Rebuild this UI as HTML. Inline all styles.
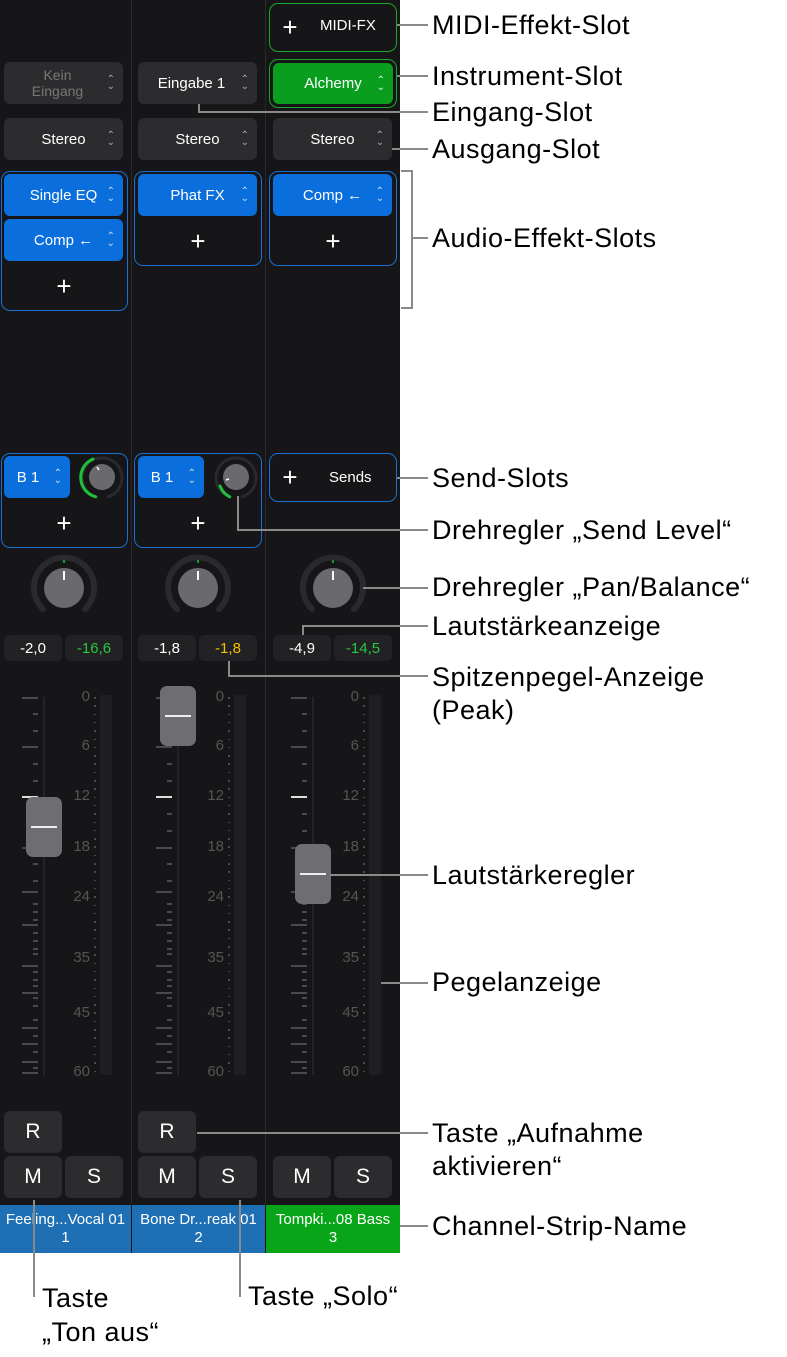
<!DOCTYPE html>
<html><head><meta charset="utf-8">
<style>
*{margin:0;padding:0;box-sizing:border-box}
body{width:787px;height:1357px;background:#fff;position:relative;overflow:hidden;font-family:"Liberation Sans",sans-serif}
#mix{position:absolute;left:0;top:0;width:400px;height:1253px;background:#161618}
.a{position:absolute}
.div{position:absolute;top:0;width:1px;height:1205px;background:#2a2a2d}
.btn{position:absolute;background:#2c2c2f;border-radius:6px;color:#fff;font-size:15px;display:flex;align-items:center;justify-content:center}
.blue{background:#0a6fdc}
.grn{background:#0a9e1e}
.box{position:absolute;border:1.5px solid #1a6fd0;border-radius:9px}
.chev{position:absolute;right:8px;top:50%;transform:translateY(-50%);font-size:10px;line-height:7px;color:#aaa;text-align:center}
.plus{position:absolute;color:#fff;font-size:26px;font-weight:300;width:30px;text-align:center;line-height:26px}
.val{position:absolute;background:#222224;border-radius:5px;font-size:15px;color:#fff;display:flex;align-items:center;justify-content:center;height:26px;width:58px}
.lbl{position:absolute;left:432px;font-size:27px;letter-spacing:0.5px;color:#000;line-height:30px;white-space:nowrap}
.ln{position:absolute;background:#8a8a8a}
.cap{position:absolute;width:36px;height:60px;background:#6e6e72;border-radius:7px}
.cap:after{content:"";position:absolute;left:5px;right:5px;top:29px;height:2px;background:#eee}
.name{position:absolute;top:1205px;height:48px;color:#fff;font-size:15px;text-align:center;line-height:18px;padding-top:6px;white-space:nowrap;overflow:hidden}
</style></head><body>
<div id="mix">
<div class="div" style="left:131px"></div><div class="div" style="left:265px"></div>

<div class="a" style="left:269px;top:3px;width:128px;height:49px;border:1.5px solid #18a82a;border-radius:9px"></div>
<div class="plus" style="left:275px;top:14px">+</div>
<div class="a" style="left:320px;top:17px;color:#fff;font-size:15px">MIDI-FX</div>
<div class="a" style="left:269px;top:59px;width:128px;height:49px;border:1.5px solid #18a82a;border-radius:9px"></div>
<div class="btn grn" style="left:273px;top:63px;width:120px;height:41px">Alchemy<span class="chev" style="color:#cfe">⌃<br>⌄</span></div>

<div class="btn" style="left:4px;top:62px;width:119px;height:42px;color:#777;font-size:14px;line-height:16px;text-align:center;padding-right:12px">Kein<br>Eingang<span class="chev">⌃<br>⌄</span></div>
<div class="btn" style="left:138px;top:62px;width:119px;height:42px;padding-right:12px">Eingabe 1<span class="chev">⌃<br>⌄</span></div>

<div class="btn" style="left:4px;top:118px;width:119px;height:42px">Stereo<span class="chev">⌃<br>⌄</span></div>
<div class="btn" style="left:138px;top:118px;width:119px;height:42px">Stereo<span class="chev">⌃<br>⌄</span></div>
<div class="btn" style="left:273px;top:118px;width:119px;height:42px">Stereo<span class="chev">⌃<br>⌄</span></div>

<div class="box" style="left:1px;top:171px;width:127px;height:140px"></div>
<div class="btn blue" style="left:4px;top:174px;width:119px;height:42px">Single EQ<span class="chev" style="color:#cde">⌃<br>⌄</span></div>
<div class="btn blue" style="left:4px;top:219px;width:119px;height:42px">Comp ←<span class="chev" style="color:#cde">⌃<br>⌄</span></div>
<div class="plus" style="left:49px;top:273px">+</div>
<div class="box" style="left:134px;top:171px;width:128px;height:95px"></div>
<div class="btn blue" style="left:138px;top:174px;width:119px;height:42px">Phat FX<span class="chev" style="color:#cde">⌃<br>⌄</span></div>
<div class="plus" style="left:183px;top:228px">+</div>
<div class="box" style="left:269px;top:171px;width:128px;height:95px"></div>
<div class="btn blue" style="left:273px;top:174px;width:119px;height:42px">Comp ←<span class="chev" style="color:#cde">⌃<br>⌄</span></div>
<div class="plus" style="left:318px;top:228px">+</div>

<div class="box" style="left:1px;top:453px;width:127px;height:95px"></div>
<div class="btn blue" style="left:4px;top:456px;width:66px;height:42px;padding-right:18px">B 1<span class="chev" style="color:#cde">⌃<br>⌄</span></div>
<div class="plus" style="left:49px;top:510px">+</div>
<div class="box" style="left:134px;top:453px;width:128px;height:95px"></div>
<div class="btn blue" style="left:138px;top:456px;width:66px;height:42px;padding-right:18px">B 1<span class="chev" style="color:#cde">⌃<br>⌄</span></div>
<div class="plus" style="left:183px;top:510px">+</div>
<div class="box" style="left:269px;top:453px;width:128px;height:49px"></div>
<div class="plus" style="left:275px;top:464px">+</div>
<div class="a" style="left:329px;top:469px;color:#fff;font-size:15px">Sends</div>
<svg class="a" style="left:0;top:0" width="400" height="700">
 <g fill="none" stroke-width="3" stroke-linecap="round">
  <path d="M95.7 496.8 A20 20 0 1 1 108.3 496.8" stroke="#2a2a2d"/>
  <path d="M95.7 496.8 A20 20 0 0 1 93 459" stroke="#1dc23a"/>
  <path d="M229.7 496.8 A20 20 0 1 1 242.3 496.8" stroke="#2a2a2d"/>
  <path d="M229.7 496.8 A20 20 0 0 1 220 486" stroke="#1dc23a"/>
  <path d="M43 609 A30 30 0 1 1 85 609" stroke="#2a2a2d" stroke-width="6"/>
  <path d="M177 609 A30 30 0 1 1 219 609" stroke="#2a2a2d" stroke-width="6"/>
  <path d="M312 609 A30 30 0 1 1 354 609" stroke="#2a2a2d" stroke-width="6"/>
 </g>
 <circle cx="102" cy="477" r="13" fill="#6a6a6e"/><line x1="97" y1="467" x2="99" y2="470" stroke="#fff" stroke-width="1.5"/>
 <circle cx="236" cy="477" r="13" fill="#6a6a6e"/><line x1="226" y1="480" x2="229" y2="479" stroke="#fff" stroke-width="1.5"/>
 <circle cx="64" cy="588" r="20" fill="#6a6a6e"/><line x1="64" y1="571" x2="64" y2="580" stroke="#fff" stroke-width="2"/><line x1="64" y1="560" x2="64" y2="563" stroke="#1dc23a" stroke-width="1.5"/>
 <circle cx="198" cy="588" r="20" fill="#6a6a6e"/><line x1="198" y1="571" x2="198" y2="580" stroke="#fff" stroke-width="2"/><line x1="198" y1="560" x2="198" y2="563" stroke="#1dc23a" stroke-width="1.5"/>
 <circle cx="333" cy="588" r="20" fill="#6a6a6e"/><line x1="333" y1="571" x2="333" y2="580" stroke="#fff" stroke-width="2"/><line x1="333" y1="560" x2="333" y2="563" stroke="#1dc23a" stroke-width="1.5"/>
</svg>

<div class="val" style="left:4px;top:635px">-2,0</div><div class="val" style="left:65px;top:635px;color:#28c840">-16,6</div>
<div class="val" style="left:138px;top:635px">-1,8</div><div class="val" style="left:199px;top:635px;color:#f0c000">-1,8</div>
<div class="val" style="left:273px;top:635px">-4,9</div><div class="val" style="left:334px;top:635px;color:#28c840">-14,5</div>

<div id="faders"></div>

<div class="btn" style="left:4px;top:1111px;width:58px;height:42px;font-size:21px">R</div>
<div class="btn" style="left:138px;top:1111px;width:58px;height:42px;font-size:21px">R</div>
<div class="btn" style="left:4px;top:1156px;width:58px;height:42px;font-size:21px">M</div>
<div class="btn" style="left:65px;top:1156px;width:58px;height:42px;font-size:21px">S</div>
<div class="btn" style="left:138px;top:1156px;width:58px;height:42px;font-size:21px">M</div>
<div class="btn" style="left:199px;top:1156px;width:58px;height:42px;font-size:21px">S</div>
<div class="btn" style="left:273px;top:1156px;width:58px;height:42px;font-size:21px">M</div>
<div class="btn" style="left:334px;top:1156px;width:58px;height:42px;font-size:21px">S</div>

<div class="name" style="left:0;width:131px;background:#1e6fb3">Feeling...Vocal 01<br>1</div>
<div class="name" style="left:132px;width:133px;background:#1e6fb3">Bone Dr...reak 01<br>2</div>
<div class="name" style="left:266px;width:134px;background:#08a518">Tompki...08 Bass<br>3</div>
</div>

<div class="ln" style="left:397px;top:24px;width:31px;height:2px"></div>
<div class="ln" style="left:397px;top:75px;width:31px;height:2px"></div>
<div class="ln" style="left:198px;top:104px;width:2px;height:9px"></div>
<div class="ln" style="left:198px;top:111px;width:230px;height:2px"></div>
<div class="ln" style="left:392px;top:148px;width:36px;height:2px"></div>
<div class="ln" style="left:401px;top:170px;width:12px;height:2px"></div>
<div class="ln" style="left:411px;top:170px;width:2px;height:139px"></div>
<div class="ln" style="left:401px;top:307px;width:12px;height:2px"></div>
<div class="ln" style="left:411px;top:237px;width:17px;height:2px"></div>
<div class="ln" style="left:397px;top:477px;width:31px;height:2px"></div>
<div class="ln" style="left:237px;top:496px;width:2px;height:35px"></div>
<div class="ln" style="left:237px;top:529px;width:191px;height:2px"></div>
<div class="ln" style="left:363px;top:587px;width:65px;height:2px"></div>
<div class="ln" style="left:302px;top:625px;width:2px;height:10px"></div>
<div class="ln" style="left:302px;top:625px;width:126px;height:2px"></div>
<div class="ln" style="left:228px;top:661px;width:2px;height:16px"></div>
<div class="ln" style="left:228px;top:675px;width:200px;height:2px"></div>
<div class="ln" style="left:330px;top:874px;width:98px;height:2px"></div>
<div class="ln" style="left:381px;top:982px;width:47px;height:2px"></div>
<div class="ln" style="left:197px;top:1132px;width:231px;height:2px"></div>
<div class="ln" style="left:400px;top:1225px;width:28px;height:2px"></div>
<div class="ln" style="left:33px;top:1200px;width:2px;height:97px"></div>
<div class="ln" style="left:239px;top:1200px;width:2px;height:97px"></div>

<div class="lbl" style="top:10px">MIDI-Effekt-Slot</div>
<div class="lbl" style="top:61px">Instrument-Slot</div>
<div class="lbl" style="top:97px">Eingang-Slot</div>
<div class="lbl" style="top:134px">Ausgang-Slot</div>
<div class="lbl" style="top:223px">Audio-Effekt-Slots</div>
<div class="lbl" style="top:463px">Send-Slots</div>
<div class="lbl" style="top:515px">Drehregler „Send Level“</div>
<div class="lbl" style="top:572px">Drehregler „Pan/Balance“</div>
<div class="lbl" style="top:611px">Lautstärkeanzeige</div>
<div class="lbl" style="top:661px;line-height:33px">Spitzenpegel-Anzeige<br>(Peak)</div>
<div class="lbl" style="top:860px">Lautstärkeregler</div>
<div class="lbl" style="top:967px">Pegelanzeige</div>
<div class="lbl" style="top:1117px;line-height:33px">Taste „Aufnahme<br>aktivieren“</div>
<div class="lbl" style="top:1211px">Channel-Strip-Name</div>
<div class="lbl" style="left:42px;top:1281px;line-height:34px">Taste<br>„Ton aus“</div>
<div class="lbl" style="left:248px;top:1281px">Taste „Solo“</div>

<script>
var f=document.getElementById('faders'),h='';
var marks=[[0,697],[6,746],[12,796],[18,847],[24,897],[35,958],[45,1013],[60,1072]];
var big=[697,746,796,847,891,924,965,992,1027,1043,1061,1072];
var small=[713,730,763,780,813,830,863,880,903,911,919,932,940,948,953,971,979,985,997,1005,1019,1035,1051,1067];
[0,134,269].forEach(function(o){
 h+='<div class="a" style="left:'+(o+43)+'px;top:697px;width:2px;height:378px;background:#242427"></div>';
 big.forEach(function(y){h+='<div class="a" style="left:'+(o+22)+'px;top:'+y+'px;width:16px;height:1.5px;background:'+(y==796?'#ddd':'#4a4a4e')+'"></div>';});
 small.forEach(function(y){h+='<div class="a" style="left:'+(o+33)+'px;top:'+y+'px;width:5px;height:1.5px;background:#4a4a4e"></div>';});
 marks.forEach(function(m){h+='<div class="a" style="left:'+(o+66)+'px;top:'+(m[1]-9)+'px;width:24px;text-align:right;color:#555;font-size:15px">'+m[0]+'</div>';});
 for(var y=697;y<=1072;y+=8.3){h+='<div class="a" style="left:'+(o+94)+'px;top:'+y+'px;width:1.5px;height:1.5px;background:#4a4a4e"></div>';}
 h+='<div class="a" style="left:'+(o+100)+'px;top:695px;width:12px;height:380px;background:#1f1f22;border-radius:2px"></div>';
});
h+='<div class="cap" style="left:26px;top:797px"></div><div class="cap" style="left:160px;top:686px"></div><div class="cap" style="left:295px;top:844px"></div>';
f.innerHTML=h;
</script>
</body></html>
